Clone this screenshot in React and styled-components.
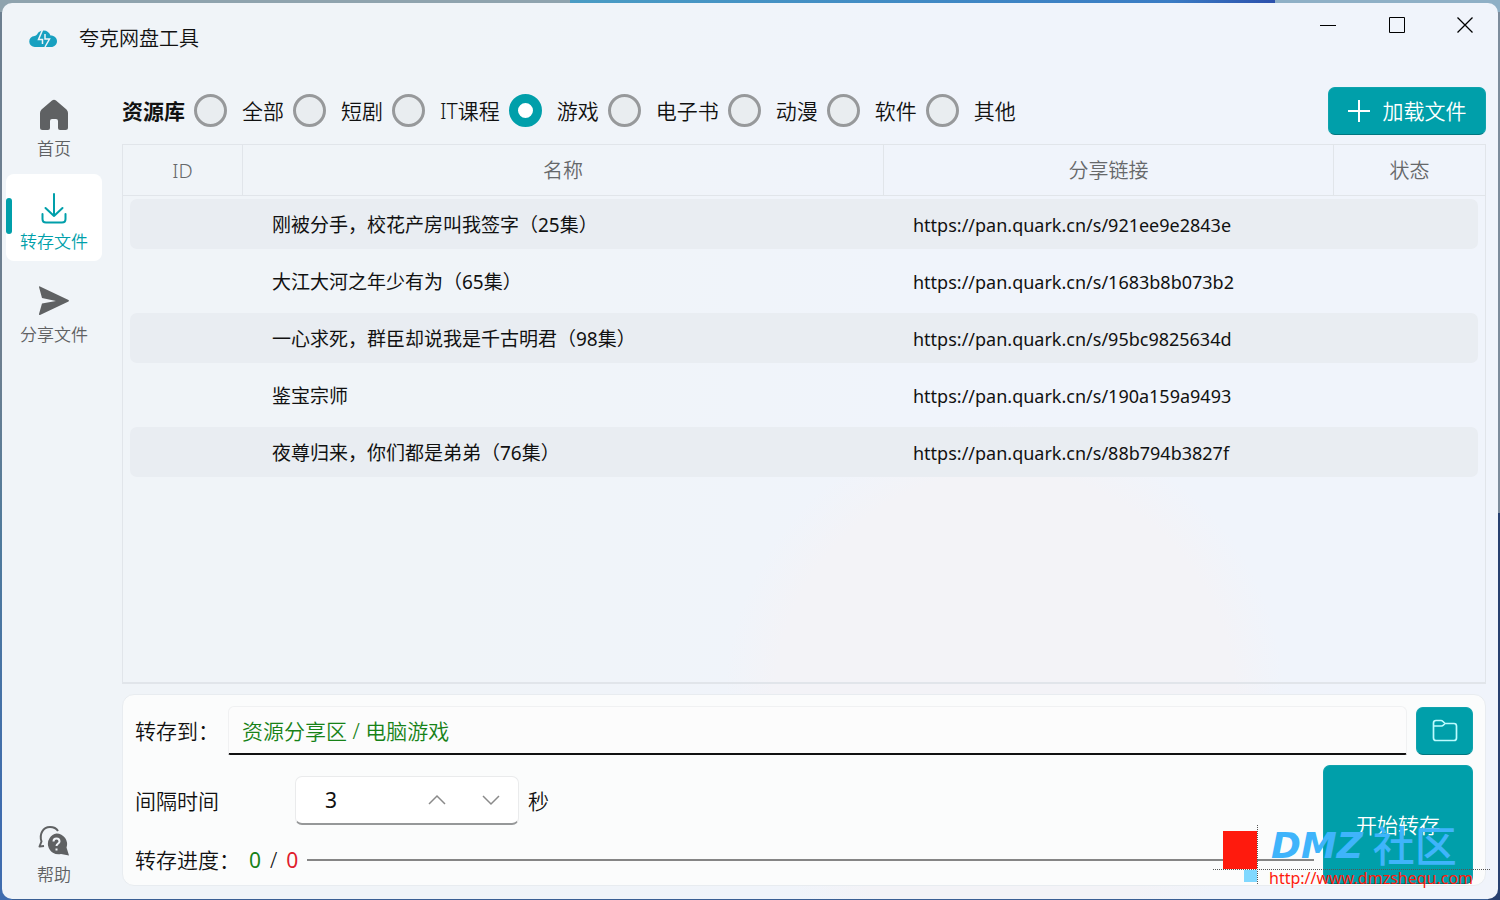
import React, { useState } from 'react'
import styled, { createGlobalStyle, css } from 'styled-components'

const teal = '#009faa'
const line = '#e1e5ea'

const categories = ['全部', '短剧', 'IT课程', '游戏', '电子书', '动漫', '软件', '其他']

const files = [
  { name: '刚被分手，校花产房叫我签字（25集）', url: 'https://pan.quark.cn/s/921ee9e2843e' },
  { name: '大江大河之年少有为（65集）', url: 'https://pan.quark.cn/s/1683b8b073b2' },
  { name: '一心求死，群臣却说我是千古明君（98集）', url: 'https://pan.quark.cn/s/95bc9825634d' },
  { name: '鉴宝宗师', url: 'https://pan.quark.cn/s/190a159a9493' },
  { name: '夜尊归来，你们都是弟弟（76集）', url: 'https://pan.quark.cn/s/88b794b3827f' },
]

const GlobalStyle = createGlobalStyle`
  * {
    box-sizing: border-box;
  }

  body {
    margin: 0;
    font-family: 'Noto Sans', 'Noto Sans CJK SC', sans-serif;
    font-size: 21px;
    font-weight: 350;
    line-height: 28px;
    color: #111;
  }

  button, input {
    font: inherit;
    color: inherit;
  }
`

const Desktop = styled.div`
  display: flex;
  min-height: 100vh;
  padding: 3px 2px 1px;
  background:
    linear-gradient(90deg, #8fa3ae 38%, #4a9cc4 38%, #3a7cc4 78%, #2c50ac 85%, #8fb0c6 85%) top / 100% 12px no-repeat,
    linear-gradient(180deg, #7d8c9c 57%, #27406f 57%) right / 12px 100% no-repeat,
    linear-gradient(180deg, #6d7f90 40%, #4f7a9c 60%, #3f6cae 90%) left / 12px 100% no-repeat,
    #3a5f94;
`

const Window = styled.div`
  position: relative;
  flex: 1;
  display: flex;
  flex-direction: column;
  border-radius: 10px;
  background:
    radial-gradient(circle at 67% 78%, #f3f3f7 0, #f3f3f7 230px, transparent 280px),
    linear-gradient(90deg, #f0f4f8 30%, #f0f4fb 60%);
`

const TitleBar = styled.header`
  display: flex;
  align-items: flex-start;
  height: 78px;
  padding-left: 27px;
`

const Brand = styled.h1`
  flex: 1;
  display: flex;
  align-items: center;
  gap: 21px;
  height: 71px;
  margin: 0;
  font-size: 20px;
  font-weight: inherit;
`

const CaptionButton = styled.button`
  display: grid;
  place-items: center;
  width: 69px;
  height: 44px;
  padding: 0;
  border: 0;
  background: none;

  &:last-child {
    width: 67px;
  }
`

const Body = styled.div`
  flex: 1;
  display: flex;
`

const Sidebar = styled.nav`
  display: flex;
  flex-direction: column;
  gap: 6px;
  width: 120px;
  padding: 0 20px 5px 4px;
`

const NavItem = styled.button`
  position: relative;
  display: flex;
  flex-direction: column;
  align-items: center;
  justify-content: flex-end;
  gap: 6px;
  height: 87px;
  padding: 0 0 7px;
  border: 0;
  border-radius: 8px;
  background: none;
  color: #5f6163;
  font-size: 17px;
  line-height: 24px;

  ${p => p.$bottom && css`margin-top: auto;`}

  ${p => p.$active && css`
    background: #fff;
    color: ${teal};

    &::before {
      content: '';
      position: absolute;
      left: 0;
      top: 24px;
      width: 6px;
      height: 36px;
      border-radius: 3px;
      background: ${teal};
    }
  `}
`

const Main = styled.main`
  flex: 1;
  display: flex;
  flex-direction: column;
  min-width: 0;
  padding: 6px 12px 13px 0;
`

const Toolbar = styled.div`
  display: flex;
  align-items: center;
  justify-content: space-between;
  height: 47px;
  margin-bottom: 10px;
`

const Categories = styled.fieldset`
  display: flex;
  align-items: center;
  gap: 9px;
  margin: 0;
  padding: 0;
  border: 0;
`

const CategoryTitle = styled.strong`
  font-weight: 700;
`

const Category = styled.label`
  display: flex;
  align-items: center;
  gap: 15px;
`

const Radio = styled.input`
  appearance: none;
  width: 33px;
  height: 33px;
  margin: 0;
  border: 3px solid #97999b;
  border-radius: 50%;
  background: #e9edf0;

  &:checked {
    border: 9px solid ${teal};
    background: #fff;
  }
`

const PrimaryButton = styled.button`
  display: flex;
  align-items: center;
  justify-content: center;
  gap: 13px;
  width: ${p => p.$width};
  height: ${p => p.$height};
  padding: 0;
  border: 1px solid #0fa3ad;
  border-bottom-color: #007780;
  border-radius: 7px;
  background: ${teal};
  color: #fff;
`

const TableFrame = styled.div`
  flex: 1;
  margin-bottom: 10px;
  border: 1px solid ${line};
  border-bottom-width: 2px;
`

const Table = styled.table`
  width: 100%;
  table-layout: fixed;
  border-collapse: separate;
  border-spacing: 0;

  th {
    height: 51px;
    padding: 2px 0 0;
    border-right: 1px solid ${line};
    border-bottom: 1px solid ${line};
    color: #66686a;
    font-size: 20px;
    font-weight: inherit;
  }

  th:last-child {
    border-right: 0;
  }

  td {
    padding: 3px 0 4px;
  }

  td:first-child {
    padding-left: 7px;
  }

  td:last-child {
    padding-right: 7px;
  }
`

const Cell = styled.div`
  height: 50px;
  padding: 1px 0 0 29px;
  font-size: ${p => p.$latin ? '18px' : '19px'};
  font-weight: 400;
  line-height: 50px;
  white-space: nowrap;

  tr:nth-child(odd) & {
    background: #e9edf2;
  }

  td:first-child & {
    border-radius: 7px 0 0 7px;
  }

  td:last-child & {
    border-radius: 0 7px 7px 0;
  }
`

const Panel = styled.section`
  display: grid;
  grid-template-columns: 1fr auto;
  column-gap: 9px;
  padding: 11px 12px 1px;
  border: 1px solid #e8ecf0;
  border-radius: 12px;
  background: #fbfcfc;
`

const TargetRow = styled.div`
  grid-column: 1 / -1;
  display: flex;
  align-items: center;
  gap: 9px;
  margin-bottom: 10px;
`

const Label = styled.label`
  width: ${p => p.$width};
  white-space: nowrap;
`

const TargetInput = styled.input`
  flex: 1;
  min-width: 0;
  height: 49px;
  padding: 0 13px;
  border: 1px solid #f0f1f2;
  border-bottom: 2px solid #111;
  border-radius: 6px 6px 2px 2px;
  background: #fcfcfc;
  color: #178217;
`

const Settings = styled.div`
  display: flex;
  flex-direction: column;
  gap: 21px;
  padding-top: 11px;
`

const SettingRow = styled.div`
  display: flex;
  align-items: center;
  gap: 9px;
`

const SpinBox = styled.div`
  display: flex;
  align-items: center;
  width: 224px;
  height: 49px;
  border: 1px solid #eaebec;
  border-bottom: 2px solid #969899;
  border-radius: 7px;
  background: #fff;
`

const SpinInput = styled.input`
  flex: 1;
  min-width: 0;
  padding: 0 0 0 29px;
  border: 0;
  background: none;
  font-weight: 400;
`

const SpinButton = styled.button`
  display: grid;
  place-items: center;
  width: 54px;
  height: 44px;
  padding: 0;
  border: 0;
  background: none;
`

const Count = styled.span`
  color: ${p => p.$color};
  font-weight: 400;
`

const Track = styled.div`
  flex: 1;
  height: 2px;
  background: #858585;
`

const Watermark = styled.div`
  position: absolute;
  right: 8px;
  bottom: 12px;
  width: 277px;
  height: 63px;
  pointer-events: none;
`

const WatermarkMark = styled.svg`
  position: absolute;
  inset: 0;
`

const WatermarkText = styled.div`
  position: absolute;
  left: 56px;
  top: 0;
  display: flex;
  flex-direction: column;
  white-space: nowrap;
`

const WatermarkName = styled.span`
  display: flex;
  align-items: center;
  gap: 10px;
  height: 44px;
  padding-left: 2px;
  color: #3fb4fb;
  font-size: 42px;
  font-weight: 500;

  i {
    font-family: 'DejaVu Sans', sans-serif;
    font-size: 36px;
    font-weight: 700;
  }
`

const WatermarkUrl = styled.span`
  height: 20px;
  color: #ff1a0d;
  font-size: 16px;
  font-weight: 400;
  line-height: 20px;
`

const Logo = () => (
  <svg width="29" height="18" viewBox="0 0 29 18">
    <path d="M6 17a5.500 5.500 0 0 1-.5-11Q7 5.500 8 4.500C9.500 1.500 12 .5 14.500.5c3.500 0 6 2 7 5 4 0 6.500 2.500 6.500 5.700S25.500 17 22 17z" fill="#18a0c0" />
    <path d="M13.500 0L9.500 9.500h4V14M16 4v5h4.500L16 17" fill="none" stroke="#f0f4f8" strokeWidth="1.500" />
  </svg>
)

const HomeIcon = () => (
  <svg width="30" height="32" viewBox="0 0 30 32">
    <path d="M13 1.500q2-1.500 4 0l10.500 9q1.500 1.500 1.500 3.500v14.500q0 2.500-2.500 2.500H21q-2 0-2-2v-7q0-2-2-2h-4q-2 0-2 2v7q0 2-2 2H3.500Q1 31 1 28.500V14q0-2 1.500-3.500z" fill="currentColor" />
  </svg>
)

const DownloadIcon = () => (
  <svg width="26" height="32" viewBox="0 0 26 32" fill="none" stroke="currentColor" strokeWidth="2" strokeLinecap="round" strokeLinejoin="round">
    <path d="M13 2v22M4.500 16l8.500 8 8.500-8M1.500 22v5q0 3.500 3.500 3.500h16q3.500 0 3.500-3.500v-5" />
  </svg>
)

const SendIcon = () => (
  <svg width="32" height="32" viewBox="0 0 32 32">
    <path d="M1 2q0-1 1-.6L30.500 15q1 .8 0 1.600L2 30q-1.200.4-1-1l3-10.500L18 16 4 13z" fill="currentColor" />
  </svg>
)

const HelpIcon = () => (
  <svg width="32" height="32" viewBox="0 0 32 32">
    <path d="M6 21l-4.500 0.500 2-5C1 9 5 2 12 2c4 0 6.500 1.500 8 4" fill="none" stroke="currentColor" strokeWidth="2" strokeLinejoin="round" />
    <path d="M18.500 8.500a10.500 10.500 0 0 1 10 14l2.500 8-8-1.500a10.500 10.500 0 1 1-4.500-20.500z" fill="currentColor" />
    <path d="M15.500 16.500q0-3 3-3t3 3c0 2-3 2-3 4.500M18.500 23.500v2" fill="none" stroke="#f0f4f8" strokeWidth="2" />
  </svg>
)

const Chevron = ({ up }) => (
  <svg width="18" height="12" viewBox="0 0 18 12" fill="none" stroke="#8a8a8a" strokeWidth="1.500">
    <path d={up ? 'M1 10l8-8 8 8' : 'M1 2l8 8 8-8'} />
  </svg>
)

const FolderIcon = () => (
  <svg width="26" height="24" viewBox="0 0 26 24" fill="none" stroke="#bdfbff" strokeWidth="1.700" strokeLinejoin="round">
    <path d="M1.500 7V4q0-2.500 2.500-2.500h5q1 0 2 1L13 4.500h9q2.500 0 2.500 2.500v12Q24.500 21.500 22 21.500H4q-2.500 0-2.500-2.500zM1.500 7H9.500q1 0 2-1L13 4.500" />
  </svg>
)

const PlusIcon = () => (
  <svg width="22" height="22" viewBox="0 0 22 22" stroke="#fff" strokeWidth="2">
    <path d="M11 0v22M0 11h22" />
  </svg>
)

export default () => {
  const [category, setCategory] = useState('游戏')
  const [page, setPage] = useState('转存文件')
  const [target, setTarget] = useState('资源分享区 / 电脑游戏')
  const [seconds, setSeconds] = useState(3)

  const navItem = (name, Icon, bottom) => (
    <NavItem $active={page === name} $bottom={bottom} onClick={() => setPage(name)}>
      <Icon />
      {name}
    </NavItem>
  )

  return (
    <Desktop lang="zh-CN">
      <GlobalStyle />
      <Window>
        <TitleBar>
          <Brand><Logo />夸克网盘工具</Brand>
          <CaptionButton aria-label="最小化">
            <svg width="16" height="16" stroke="#000"><path d="M0 8.500h16" /></svg>
          </CaptionButton>
          <CaptionButton aria-label="最大化">
            <svg width="16" height="16" fill="none" stroke="#000"><path d="M.5.5h15v15H.5z" /></svg>
          </CaptionButton>
          <CaptionButton aria-label="关闭">
            <svg width="16" height="16" stroke="#000" strokeWidth="1.300"><path d="M.5.5l15 15M15.500.5l-15 15" /></svg>
          </CaptionButton>
        </TitleBar>

        <Body>
          <Sidebar>
            {navItem('首页', HomeIcon)}
            {navItem('转存文件', DownloadIcon)}
            {navItem('分享文件', SendIcon)}
            {navItem('帮助', HelpIcon, true)}
          </Sidebar>

          <Main>
            <Toolbar>
              <Categories>
                <CategoryTitle>资源库</CategoryTitle>
                {categories.map(name => (
                  <Category key={name}>
                    <Radio
                      type="radio"
                      name="category"
                      checked={category === name}
                      onChange={() => setCategory(name)}
                    />
                    {name}
                  </Category>
                ))}
              </Categories>
              <PrimaryButton $width="158px" $height="48px"><PlusIcon />加载文件</PrimaryButton>
            </Toolbar>

            <TableFrame>
              <Table>
                <colgroup>
                  <col width="120" />
                  <col />
                  <col width="450" />
                  <col width="151" />
                </colgroup>
                <thead>
                  <tr>
                    <th>ID</th>
                    <th>名称</th>
                    <th>分享链接</th>
                    <th>状态</th>
                  </tr>
                </thead>
                <tbody>
                  {files.map(({ name, url }) => (
                    <tr key={url}>
                      <td><Cell /></td>
                      <td><Cell>{name}</Cell></td>
                      <td><Cell $latin>{url}</Cell></td>
                      <td><Cell /></td>
                    </tr>
                  ))}
                </tbody>
              </Table>
            </TableFrame>

            <Panel>
              <TargetRow>
                <Label htmlFor="target" $width="84px">转存到：</Label>
                <TargetInput id="target" value={target} onChange={e => setTarget(e.target.value)} />
                <PrimaryButton $width="57px" $height="48px" aria-label="选择文件夹"><FolderIcon /></PrimaryButton>
              </TargetRow>
              <Settings>
                <SettingRow>
                  <Label htmlFor="interval" $width="151px">间隔时间</Label>
                  <SpinBox>
                    <SpinInput id="interval" value={seconds} onChange={e => setSeconds(Number(e.target.value) || 0)} />
                    <SpinButton aria-label="增加" onClick={() => setSeconds(seconds + 1)}><Chevron up /></SpinButton>
                    <SpinButton aria-label="减少" onClick={() => setSeconds(Math.max(0, seconds - 1))}><Chevron /></SpinButton>
                  </SpinBox>
                  秒
                </SettingRow>
                <SettingRow>
                  <Label as="span" $width="105px">转存进度：</Label>
                  <Count $color="#178217">0</Count>
                  /
                  <Count $color="#e0202c">0</Count>
                  <Track />
                </SettingRow>
              </Settings>
              <PrimaryButton $width="150px" $height="119px">开始转存</PrimaryButton>
            </Panel>
          </Main>
        </Body>

        <Watermark>
          <WatermarkMark width="277" height="63">
            <path d="M10 7h34v38H10z" fill="#ff1a0d" />
            <path d="M31 46h13v12H31z" fill="#80d8ff" />
            <path d="M44.500 1v60M0 45.500h277" stroke="#555" strokeDasharray="1 1" />
          </WatermarkMark>
          <WatermarkText>
            <WatermarkName><i>DMZ</i>社区</WatermarkName>
            <WatermarkUrl>http://www.dmzshequ.com</WatermarkUrl>
          </WatermarkText>
        </Watermark>
      </Window>
    </Desktop>
  )
}
